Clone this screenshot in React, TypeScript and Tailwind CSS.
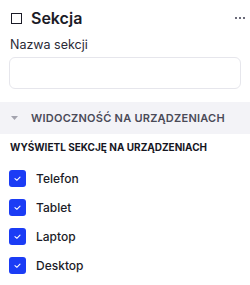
import React from "react";

const Check = () => (
  <span className="flex h-[17px] w-[17px] items-center justify-center rounded-[3px] bg-[#1b3cf5]">
    <svg width="9" height="9" viewBox="0 0 10 10" fill="none">
      <path d="M2.2 5.2 L4.3 7 L7.8 3.4" stroke="white" strokeWidth="1.2" strokeLinecap="round" strokeLinejoin="round" />
    </svg>
  </span>
);

export default function App() {
  const items = ["Telefon", "Tablet", "Laptop", "Desktop"];
  return (
    <div className="w-[250px] h-[285px] bg-white text-[#1b1b27]" style={{ fontFamily: "Inter, 'Noto Sans', sans-serif" }}>
      <div className="flex h-[36px] items-center justify-between pl-[11px] pr-[5px]">
        <div className="flex items-center gap-[9px]">
          <span className="h-[11px] w-[11px] border-[1.5px] border-[#1b1b27]" />
          <span className="text-[16px] font-semibold leading-none">Sekcja</span>
        </div>
        <div className="flex gap-[2px]">
          <span className="h-[2px] w-[2px] bg-[#6b6b7a]" />
          <span className="h-[2px] w-[2px] bg-[#6b6b7a]" />
          <span className="h-[2px] w-[2px] bg-[#6b6b7a]" />
        </div>
      </div>
      <div className="px-[9px]">
        <div className="pl-[1px] text-[12.5px] leading-[18px] text-[#2a2a36]">Nazwa sekcji</div>
        <div className="mt-[3px] h-[32px] rounded-[6px] border border-[#e6e6ec] bg-white" />
      </div>
      <div className="mt-[13px] flex h-[32px] items-center gap-[13px] bg-[#f3f3f7] pl-[11px]">
        <svg width="7" height="4" viewBox="0 0 7 4"><path d="M0 0 H7 L3.5 4 Z" fill="#a3a3ae" /></svg>
        <span className="text-[11px] font-semibold tracking-[0.25px] text-[#4a4a57]">WIDOCZNOŚĆ NA URZĄDZENIACH</span>
      </div>
      <div className="pl-[10px] pt-[6px] text-[10px] font-bold leading-[14px] text-[#16161f]">WYŚWIETL SEKCJĘ NA URZĄDZENIACH</div>
      <div className="mt-[16px] flex flex-col gap-[12px] pl-[9px]">
        {items.map((t) => (
          <div key={t} className="flex h-[17px] items-center gap-[10px]">
            <Check />
            <span className="text-[12px] font-medium text-[#1b1b27]">{t}</span>
          </div>
        ))}
      </div>
    </div>
  );
}
